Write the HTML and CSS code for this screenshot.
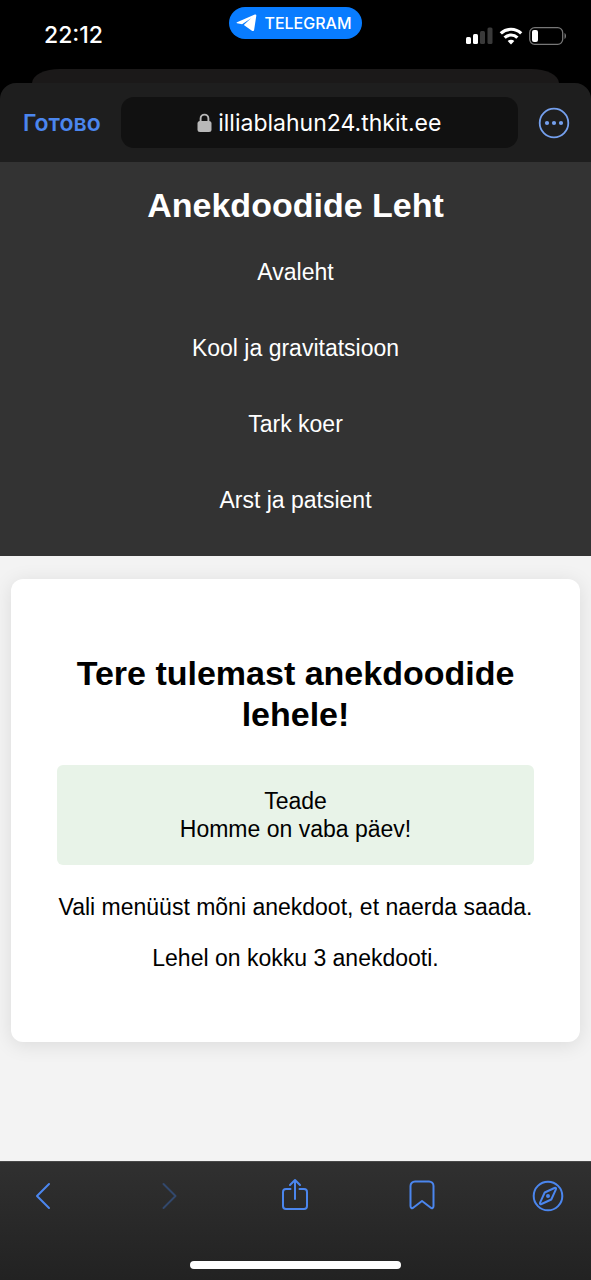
FILE: index.html
```html
<!DOCTYPE html>
<html lang="et">
<head>
<meta charset="utf-8">
<meta name="viewport" content="width=device-width, initial-scale=1">
<title>Anekdoodide Leht</title>
<link rel="stylesheet" href="styles.css">
</head>
<body>
<div class="screen">
  <div class="status">
    <time class="clock">22:12</time>
    <button class="pill" type="button">
      <svg width="22" height="20" viewBox="0 0 22 20" aria-hidden="true"><path d="M1 9.200 18.800 1.600c1-.4 1.700.1 1.500 1.200L18.200 16.500c-.2 1.500-1.100 2-2.300 1.200L8.500 12.600c-.6-.4-.5-.9 0-1.300L15 5.300 6.500 11c-.5.3-1 .3-1.600.1L1 10.200c-.6-.2-.6-.7 0-1Z" fill="#fff"/></svg>
      <span>TELEGRAM</span>
    </button>
    <div class="signals">
      <svg width="27" height="18" viewBox="0 0 27 18" aria-hidden="true"><g fill="#fff"><rect x="0" y="10" width="5" height="7" rx="1.500"/><rect x="7" y="7" width="5" height="10" rx="1.500"/></g><g fill="#3a3a3a"><rect x="14" y="4" width="5" height="13" rx="1.500"/><rect x="21.500" y="0.500" width="5" height="16.500" rx="1.500"/></g></svg>
      <svg width="24" height="18" viewBox="0 0 24 18" aria-hidden="true"><g fill="none" stroke="#fff" stroke-width="3.200"><path d="M1.800 6.400a14.600 14.600 0 0 1 20.400 0"/><path d="M5.600 10.600a9.200 9.200 0 0 1 12.800 0"/></g><path d="M12 17.400 8.700 14.100a4.700 4.700 0 0 1 6.600 0Z" fill="#fff"/></svg>
      <svg width="38" height="18" viewBox="0 0 38 18" aria-hidden="true"><rect x=".7" y=".7" width="33" height="16.600" rx="5" fill="none" stroke="#777" stroke-width="1.300"/><rect x="3" y="3" width="6" height="12" rx="2" fill="#fff"/><path d="M35.500 6c2 .7 2 5.300 0 6Z" fill="#777"/></svg>
    </div>
  </div>
  <div class="sheet-behind"></div>
  <div class="topbar">
    <button class="done" type="button" lang="ru">Готово</button>
    <div class="address">
      <svg width="15" height="19" viewBox="0 0 15 19" aria-hidden="true"><path d="M3.600 9V5.500a3.900 3.900 0 0 1 7.800 0V9" fill="none" stroke="#b8b8b8" stroke-width="1.900"/><rect x=".5" y="8" width="14" height="11" rx="2.500" fill="#b8b8b8"/></svg>
      <span>illiablahun24.thkit.ee</span>
    </div>
    <button class="icon-button" type="button" aria-label="Veel"><svg width="32" height="32" viewBox="0 0 32 32"><circle cx="16" cy="16" r="14.300" fill="none" stroke="#75a0ee" stroke-width="1.800"/><g fill="#75a0ee"><circle cx="9" cy="16" r="2.100"/><circle cx="16" cy="16" r="2.100"/><circle cx="23" cy="16" r="2.100"/></g></svg></button>
  </div>
  <header class="site-header">
    <h1 class="site-title">Anekdoodide Leht</h1>
    <nav class="site-nav">
      <a href="#avaleht">Avaleht</a>
      <a href="#kool">Kool ja gravitatsioon</a>
      <a href="#koer">Tark koer</a>
      <a href="#arst">Arst ja patsient</a>
    </nav>
  </header>
  <main class="content">
    <section class="card">
      <h2 class="card-title">Tere tulemast anekdoodide lehele!</h2>
      <div class="notice">Teade<br>Homme on vaba päev!</div>
      <p>Vali menüüst mõni anekdoot, et naerda saada.</p>
      <p>Lehel on kokku 3 anekdooti.</p>
    </section>
  </main>
  <footer class="bottombar">
    <div class="tools">
      <button class="icon-button" type="button" aria-label="Tagasi"><svg width="32" height="36" viewBox="0 0 32 36"><path d="M23 6 11 18l12 12"/></svg></button>
      <button class="icon-button" type="button" aria-label="Edasi" disabled><svg width="32" height="36" viewBox="0 0 32 36"><path d="M10.500 6 22.500 18 10.500 30"/></svg></button>
      <button class="icon-button" type="button" aria-label="Jaga"><svg width="32" height="36" viewBox="0 0 32 36"><path d="M11.500 11H7a3 3 0 0 0-3 3v14a3 3 0 0 0 3 3h18a3 3 0 0 0 3-3V14a3 3 0 0 0-3-3h-4.500M16 21V2M11 7l5-5 5 5"/></svg></button>
      <button class="icon-button" type="button" aria-label="Järjehoidjad"><svg width="32" height="36" viewBox="0 0 32 36"><path d="M4.500 8a4.500 4.500 0 0 1 4.500-4.500h14A4.500 4.500 0 0 1 27.500 8v20c0 2-1.500 2.800-3 1.500L16 23l-8.500 6.500c-1.500 1.300-3 .5-3-1.500Z"/></svg></button>
      <button class="icon-button" type="button" aria-label="Ava brauseris"><svg width="32" height="36" viewBox="0 0 32 36"><circle cx="16" cy="18" r="14.300"/><path d="M12.700 14.500 22.500 10c1.200-.5 1.900.2 1.400 1.400L19.300 21.500 9.500 26c-1.200.5-1.900-.2-1.400-1.400Z"/><circle cx="16" cy="18" r="1"/></svg></button>
    </div>
    <div class="home"></div>
  </footer>
</div>
</body>
</html>
```

FILE: styles.css
```css
* { box-sizing: border-box; }

body {
  margin: 0;
  background: #000;
  font-family: "Liberation Sans", Arial, sans-serif;
  font-size: 23px;
  line-height: 28px;
}

button {
  margin: 0;
  padding: 0;
  border: 0;
  background: none;
  font-family: Inter, sans-serif;
}

svg { display: block; flex: none; }

.screen {
  display: flex;
  flex-direction: column;
  min-height: 100vh;
}

.status {
  display: grid;
  grid-template-columns: 1fr auto 1fr;
  align-items: start;
  height: 69px;
  padding: 7px 24px 0 44px;
  color: #fff;
  font-family: Inter, sans-serif;
}

.clock {
  padding-top: 14px;
  font-size: 23px;
  font-weight: 500;
}

.pill {
  display: flex;
  align-items: center;
  gap: 6px;
  height: 32px;
  margin-right: 20px;
  padding: 0 10px 0 7px;
  border-radius: 16px;
  background: #087cff;
  color: #fff;
  font-size: 16px;
  font-weight: 500;
}

.signals {
  display: flex;
  justify-content: flex-end;
  gap: 6px;
  padding-top: 20px;
}

.sheet-behind {
  height: 14px;
  margin: 0 32px;
  border-radius: 28px 28px 0 0 / 14px 14px 0 0;
  background: #1b1919;
}

.topbar {
  display: flex;
  align-items: center;
  gap: 20px;
  height: 79px;
  padding: 0 21px 0 23px;
  border-radius: 16px 16px 0 0;
  background: #1e1e1e;
}

.done {
  color: #4b86ee;
  font-size: 23px;
  font-weight: 600;
}

.address {
  display: flex;
  flex: 1;
  align-items: center;
  justify-content: center;
  gap: 6px;
  height: 51px;
  border-radius: 13px;
  background: #111;
  color: #fff;
  font-family: Inter, sans-serif;
  font-size: 23px;
}

.site-header {
  padding: 23px 23px 42px;
  background: #333;
  color: #fff;
  text-align: center;
}

.site-title {
  margin: 0 0 33px;
  font-size: 34px;
  line-height: 40px;
}

.site-nav {
  display: flex;
  flex-direction: column;
  align-items: center;
  gap: 48px;
}

.site-nav a {
  color: #fff;
  text-decoration: none;
}

.content {
  flex: 1;
  padding: 23px 11px;
  background: #f3f3f3;
}

.card {
  padding: 74px 46px 70px;
  border-radius: 12px;
  background: #fff;
  box-shadow: 0 3px 20px rgba(0, 0, 0, 0.1);
  color: #000;
  text-align: center;
}

.card-title {
  margin: 0 0 30px;
  font-size: 34px;
  line-height: 41px;
}

.notice {
  padding: 22px;
  border-radius: 6px;
  background: #e8f3e8;
}

.card p { margin: 0 -8px; }
.notice + p { padding: 28px 0 23px; }

.bottombar {
  height: 119px;
  padding: 16px 27px 0 26px;
  border-top: 1px solid #484848;
  background: linear-gradient(#303030, #222);
}

.tools {
  display: flex;
  justify-content: space-between;
}

.tools svg {
  fill: none;
  stroke: #4b86ee;
  stroke-width: 2;
  stroke-linecap: round;
  stroke-linejoin: round;
}

.tools button:disabled svg { stroke: #32486c; }

.home {
  width: 40%;
  max-width: 211px;
  height: 8px;
  margin: 47px auto 0;
  border-radius: 4px;
  background: #fff;
}
```
